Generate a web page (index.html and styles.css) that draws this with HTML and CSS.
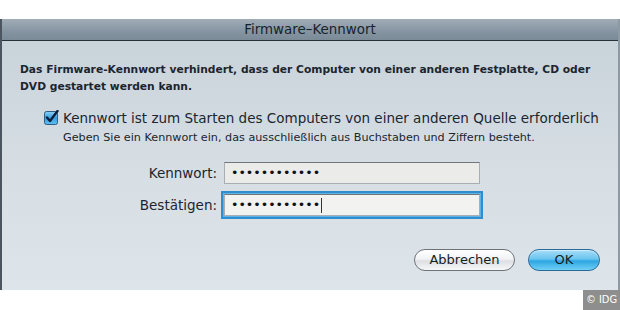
FILE: index.html
```html
<!DOCTYPE html>
<html lang="de">
<head>
<meta charset="utf-8">
<title>Firmware-Kennwort</title>
<link rel="stylesheet" href="styles.css">
</head>
<body>
<div class="top-space"></div>
<div class="dialog">
  <div class="titlebar">Firmware–Kennwort</div>
  <div class="content">
    <p class="intro">Das Firmware-Kennwort verhindert, dass der Computer von einer anderen Festplatte, CD oder DVD gestartet werden kann.</p>
    <div class="check-row">
      <span class="checkbox">
        <svg width="15" height="15" viewBox="0 0 15 15">
          <defs>
            <linearGradient id="cb" x1="0" y1="0" x2="0" y2="1">
              <stop offset="0" stop-color="#8fd0f4"/>
              <stop offset="0.5" stop-color="#3a9ee0"/>
              <stop offset="1" stop-color="#5cc0f0"/>
            </linearGradient>
          </defs>
          <rect x="0.5" y="1.5" width="13" height="13" rx="2" fill="url(#cb)" stroke="#2d5f86"/>
          <path d="M3 7.5 L6 11 L13.5 1" fill="none" stroke="#0d1f3a" stroke-width="2.4" stroke-linecap="round" stroke-linejoin="round"/>
        </svg>
      </span>
      <span class="check-label">Kennwort ist zum Starten des Computers von einer anderen Quelle erforderlich</span>
    </div>
    <p class="hint">Geben Sie ein Kennwort ein, das ausschließlich aus Buchstaben und Ziffern besteht.</p>
    <div class="form">
      <label class="field-label">Kennwort:</label>
      <div class="input">••••••••••••</div>
      <label class="field-label">Bestätigen:</label>
      <div class="input focused">••••••••••••<span class="caret"></span></div>
    </div>
    <div class="buttons">
      <button class="btn cancel">Abbrechen</button>
      <button class="btn ok">OK</button>
    </div>
  </div>
</div>
<div class="footer"><span class="badge">© IDG</span></div>
</body>
</html>
```
FILE: styles.css
```css
html, body {
  margin: 0;
  padding: 0;
  background: #ffffff;
  width: 620px;
  height: 310px;
  overflow: hidden;
  font-family: "DejaVu Sans", "Noto Sans", sans-serif;
  color: #1b2530;
}

.top-space {
  height: 19px;
}

.dialog {
  height: 271px;
  display: flex;
  flex-direction: column;
  border-left: 2px solid #4a5560;
  border-right: 2px solid #8d99a3;
  box-sizing: border-box;
}

.titlebar {
  height: 21px;
  border-bottom: 1px solid #26313b;
  background: linear-gradient(#a0adb8, #8594a1 60%, #7b8a97);
  text-align: center;
  font-size: 13.4px;
  line-height: 22px;
  color: #18222c;
}

.content {
  flex: 1;
  background: linear-gradient(#c9d3da, #d6dee4 50%, #dde4ea);
  padding: 20px 0 0 18px;
  display: flex;
  flex-direction: column;
}

.intro {
  margin: 0;
  font-size: 10.7px;
  font-weight: bold;
  line-height: 17px;
  width: 578px;
}

.check-row {
  margin-top: 14px;
  margin-left: 24px;
  display: flex;
  align-items: center;
  height: 18px;
}

.checkbox {
  width: 15px;
  height: 15px;
  display: block;
  margin-right: 4px;
  margin-top: -2px;
}

.checkbox svg {
  display: block;
}

.check-label {
  font-size: 13.5px;
  white-space: nowrap;
}

.hint {
  margin: 3px 0 0 43px;
  font-size: 11.2px;
  line-height: 15px;
  white-space: nowrap;
}

.form {
  margin-top: 17px;
  display: grid;
  grid-template-columns: 197px 256px;
  column-gap: 7px;
  row-gap: 10px;
  align-items: center;
}

.field-label {
  text-align: right;
  font-size: 13.5px;
}

.input {
  height: 22px;
  box-sizing: border-box;
  background: #ebebe9;
  border: 1px solid #a9aeb2;
  border-top-color: #6f767c;
  padding-left: 6px;
  font-size: 12.6px;
  line-height: 20px;
  color: #111;
  display: flex;
  align-items: center;
}

.input.focused {
  background: #f2f2f0;
  box-shadow: 0 0 0 1px #5fb2e3, 0 0 0 3px #2f8ed0;
}

.caret {
  display: inline-block;
  width: 1px;
  height: 15px;
  background: #333;
  margin-left: 1px;
}

.buttons {
  margin-top: 33px;
  display: flex;
  justify-content: flex-end;
  gap: 13px;
  padding-right: 18px;
}

.btn {
  height: 22px;
  border-radius: 11px;
  font-family: "DejaVu Sans", "Noto Sans", sans-serif;
  font-size: 13px;
  color: #151d25;
  padding: 0;
  line-height: 20px;
}

.cancel {
  width: 101px;
  border: 1px solid #6d7278;
  background: linear-gradient(#ffffff, #f1f3f5 45%, #dcdfe3 55%, #f6f7f8);
  box-shadow: inset 0 1px 1px rgba(255,255,255,0.8);
}

.ok {
  width: 72px;
  border: 1px solid #2a6a98;
  background: linear-gradient(#a6dcf7, #6ac5f0 45%, #2ea6e2 55%, #6fd0f6);
  box-shadow: inset 0 1px 1px rgba(255,255,255,0.5);
}

.footer {
  height: 20px;
  display: flex;
  justify-content: flex-end;
}

.badge {
  width: 37px;
  height: 20px;
  background: #8e8e8e;
  color: #ffffff;
  font-family: "DejaVu Sans Condensed", "DejaVu Sans", sans-serif;
  font-size: 11px;
  line-height: 20px;
  text-align: center;
  white-space: nowrap;
}
```
